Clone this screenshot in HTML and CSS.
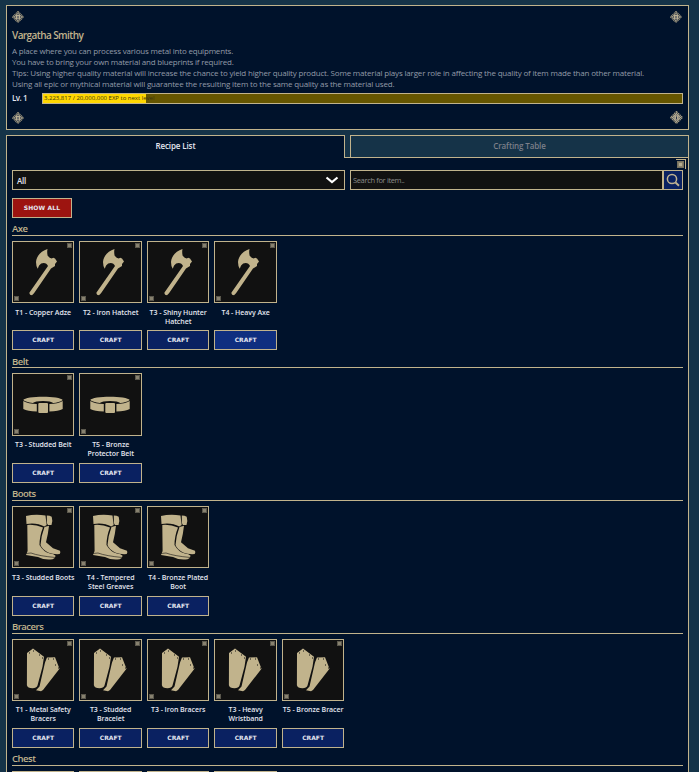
FILE: index.html
```
<!DOCTYPE html>
<html lang="en">
<head>
  <meta charset="UTF-8">
  <title>Vargatha Smithy</title>
  <link rel="stylesheet" href="styles.css">
</head>
<body>
  <svg class="sprites">
    <symbol id="ornament" viewBox="0 0 12 12">
      <path d="M6 .5 11.5 6 6 11.5 .5 6Z" fill="none" stroke="#a39b82" stroke-width="1.100" stroke-dasharray="1.500 .5"/>
      <path d="M6 2.200 9.800 6 6 9.800 2.200 6Z" fill="#4b4f57" stroke="#b5ac92"/>
      <path d="M4 4h4v4H4Z" fill="#b8ae93"/>
      <path d="M5.500 5h1v2.500h-1Z" fill="#29344c"/>
    </symbol>
    <symbol id="axe" viewBox="0 0 62 62">
      <path d="M35.500 8C29 10 24.500 15 24 21q0 4 1.700 6.800 1-4 3.500-5.300 5-1.500 6.800 2.500L17.500 51.500q-.5 2.500 2.500 2.700l2-2L39 27.500l4-2.500v-2l2-2.500-2-3-1.800-.8-1.500.9-2-.8-2-2Q34.800 11.500 35.500 8Z"/>
    </symbol>
    <symbol id="belt" viewBox="0 0 62 62">
      <path d="M11.300 28v8q4 2.300 13.500 2.600v-7.500Q16 31 11.300 28ZM50.700 28v8q-4 2.300-13.300 2.600v-7.500Q46 31 50.700 28Z"/>
      <path fill-rule="evenodd" d="M11.300 27c2-4.500 37-4.500 39.400 0-2 1.800-6 2.800-9.500 3Q39 28 31 28t-10.200 2q-7-1-9.500-3Z"/>
      <rect x="26.300" y="30" width="9.700" height="10" rx="1"/>
    </symbol>
    <symbol id="boots" viewBox="0 0 62 62">
      <path d="M34.800 9.500q3 0 4.900 1.200 1.300 4-.2 8.300h-3.600l-1-2ZM32.500 21l4.500-1.300q-1 9-3 16.500l7 6 7 2.600q.8 1.800-.3 3.200-6 .6-11.700-1.600-6-3-7.500-7.400Q29 30 32.500 21Z"/>
      <path d="M14 10q9-2 19.500-.5.500 5 1.200 9.500l-2.500 1.500Q25 16.500 14.500 18ZM15.300 19q8-.7 15.700 2.500Q27.500 30 27.500 39q4 7 10.500 8.500 4 .3 5.600 2.300-.2 2.600-3 3.500-8 1.200-14.600-2.300L14 49l1.600-4Z"/>
      <path d="m14 47.500 5-.5q8 3 24.500 4.500" fill="none" stroke="#111" stroke-width=".6"/>
    </symbol>
    <symbol id="bracers" viewBox="0 0 62 62">
      <path d="m15 14 6-4.400 11 8.200-1.500 10-5 18.700q-1 2.700-5 2.700-5 0-5.600-3ZM35 18.500l8-.2 4.500 11.500L31 51l-2 1.300-5-1 3.500-3.800 5.500-24Z"/>
      <path d="M17 14h1M21 12h1M27 16h1M30 19h1M36 20h1M41 20h1M43 26h1M46 29h1" stroke="#111"/>
    </symbol>
    <symbol id="search" viewBox="0 0 14 14">
      <circle cx="6" cy="6" r="4.600" fill="none" stroke="#c1b391" stroke-width="1.500"/>
      <path d="m9.500 9.500 3.500 3.300" stroke="#c1b391" stroke-width="1.900"/>
    </symbol>
  </svg>

  <div class="panel intro">
    <svg class="corner tl"><use href="#ornament"/></svg>
    <svg class="corner tr"><use href="#ornament"/></svg>
    <svg class="corner bl"><use href="#ornament"/></svg>
    <svg class="corner br"><use href="#ornament"/></svg>
    <h1>Vargatha Smithy</h1>
    <div class="description">
      <p class="line1">A place where you can process various metal into equipments.</p>
      <p class="line2">You have to bring your own material and blueprints if required.</p>
      <p class="line3">Tips: Using higher quality material will increase the chance to yield higher quality product. Some material plays larger role in affecting the quality of item made than other material.</p>
      <p class="line4">Using all epic or mythical material will guarantee the resulting item to the same quality as the material used.</p>
    </div>
    <div class="level">
      <span class="lv">Lv. 1</span>
      <div class="bar">
        <div class="fill" style="width: 16.119%"></div>
        <span>3,223,817 / 20,000,000 EXP to next level</span>
      </div>
    </div>
  </div>

  <div class="tabs">
    <div class="tab active">Recipe List</div>
    <div class="tab-gap"></div>
    <div class="tab">Crafting Table</div>
  </div>

  <div class="content">
    <div class="mini"></div>
    <div class="filters">
      <div class="select">
        <span>All</span>
        <svg viewBox="0 0 14 8"><path d="M1.500 1.500 7 6l5.500-4.500" fill="none" stroke="#fff" stroke-width="2.200"/></svg>
      </div>
      <div class="search">
        <div class="search-input">Search for item..</div>
        <div class="search-button"><svg><use href="#search"/></svg></div>
      </div>
    </div>
    <div class="show-all">SHOW ALL</div>

    <h2>Axe</h2>
    <div class="items">
      <div class="item">
        <div class="icon"><svg><use href="#axe"/></svg></div>
        <div class="name">T1 - Copper Adze</div>
        <div class="craft">CRAFT</div>
      </div>
      <div class="item">
        <div class="icon"><svg><use href="#axe"/></svg></div>
        <div class="name">T2 - Iron Hatchet</div>
        <div class="craft">CRAFT</div>
      </div>
      <div class="item">
        <div class="icon"><svg><use href="#axe"/></svg></div>
        <div class="name">T3 - Shiny Hunter<br>Hatchet</div>
        <div class="craft">CRAFT</div>
      </div>
      <div class="item">
        <div class="icon"><svg><use href="#axe"/></svg></div>
        <div class="name">T4 - Heavy Axe</div>
        <div class="craft hover">CRAFT</div>
      </div>
    </div>

    <h2>Belt</h2>
    <div class="items">
      <div class="item">
        <div class="icon"><svg><use href="#belt"/></svg></div>
        <div class="name">T3 - Studded Belt</div>
        <div class="craft">CRAFT</div>
      </div>
      <div class="item">
        <div class="icon"><svg><use href="#belt"/></svg></div>
        <div class="name">T5 - Bronze<br>Protector Belt</div>
        <div class="craft">CRAFT</div>
      </div>
    </div>

    <h2>Boots</h2>
    <div class="items">
      <div class="item">
        <div class="icon"><svg><use href="#boots"/></svg></div>
        <div class="name">T3 - Studded Boots</div>
        <div class="craft">CRAFT</div>
      </div>
      <div class="item">
        <div class="icon"><svg><use href="#boots"/></svg></div>
        <div class="name">T4 - Tempered<br>Steel Greaves</div>
        <div class="craft">CRAFT</div>
      </div>
      <div class="item">
        <div class="icon"><svg><use href="#boots"/></svg></div>
        <div class="name">T4 - Bronze Plated<br>Boot</div>
        <div class="craft">CRAFT</div>
      </div>
    </div>

    <h2>Bracers</h2>
    <div class="items">
      <div class="item">
        <div class="icon"><svg><use href="#bracers"/></svg></div>
        <div class="name">T1 - Metal Safety<br>Bracers</div>
        <div class="craft">CRAFT</div>
      </div>
      <div class="item">
        <div class="icon"><svg><use href="#bracers"/></svg></div>
        <div class="name">T3 - Studded<br>Bracelet</div>
        <div class="craft">CRAFT</div>
      </div>
      <div class="item">
        <div class="icon"><svg><use href="#bracers"/></svg></div>
        <div class="name">T3 - Iron Bracers</div>
        <div class="craft">CRAFT</div>
      </div>
      <div class="item">
        <div class="icon"><svg><use href="#bracers"/></svg></div>
        <div class="name">T3 - Heavy<br>Wristband</div>
        <div class="craft">CRAFT</div>
      </div>
      <div class="item">
        <div class="icon"><svg><use href="#bracers"/></svg></div>
        <div class="name">T5 - Bronze Bracer</div>
        <div class="craft">CRAFT</div>
      </div>
    </div>

    <h2>Chest</h2>
    <div class="items">
      <div class="item"><div class="icon"></div></div>
      <div class="item"><div class="icon"></div></div>
      <div class="item"><div class="icon"></div></div>
      <div class="item"><div class="icon"></div></div>
    </div>
  </div>
</body>
</html>
```
FILE: styles.css
```
*, *::before, *::after {
  box-sizing: border-box;
}
body {
  margin: 0;
  padding: 5px 10px 0 6px;
  height: 772px;
  overflow: hidden;
  background: #153348;
  color: #e4e6f0;
  font-family: "Open Sans", sans-serif;
  font-size: 8px;
}
h1, h2, p {
  margin: 0;
}
.sprites {
  position: absolute;
  width: 0;
  height: 0;
}
.panel {
  position: relative;
  height: 125px;
  padding: 23px 5px 0;
  border: 1px solid #c1b38c;
  background: #00122b;
}
.corner {
  position: absolute;
  width: 12px;
  height: 12px;
}
.tl { top: 5px; left: 5px; }
.tr { top: 5px; right: 6px; }
.bl { bottom: 5px; left: 5px; }
.br { bottom: 5px; right: 5px; width: 13px; height: 13px; }
h1 {
  height: 16px;
  font-size: 10px;
  font-weight: 600;
  line-height: 13px;
  letter-spacing: -0.580px;
  color: #c1b38c;
}
.description {
  color: #939ba8;
  line-height: 11px;
  white-space: nowrap;
}
.line1 { letter-spacing: -0.190px; }
.line2 { letter-spacing: -0.215px; }
.line3 { letter-spacing: -0.177px; }
.line4 { letter-spacing: -0.172px; }
.level {
  display: flex;
  margin-top: 4px;
}
.lv {
  width: 30px;
  font-weight: 600;
  line-height: 10px;
  letter-spacing: -0.5px;
}
.bar {
  position: relative;
  flex: 1;
  height: 11px;
  border: 1px solid #c1b38c;
  background: #665600;
}
.fill {
  height: 100%;
  background: #ffd700;
}
.bar span {
  position: absolute;
  left: 1px;
  top: 0;
  font-size: 6px;
  line-height: 9px;
  color: #3b3410;
  white-space: nowrap;
}
.tabs {
  display: flex;
  height: 23px;
  margin-top: 5px;
}
.tab {
  flex: 1;
  height: 23px;
  border: 1px solid #c1b38c;
  text-align: center;
  font-weight: 600;
  line-height: 20px;
  letter-spacing: -0.120px;
  color: #7c7f89;
}
.tab.active {
  border-bottom: 0;
  background: #00122b;
  color: #e4e6f0;
}
.tab-gap {
  width: 5px;
  border-bottom: 1px solid #c1b38c;
}
.content {
  position: relative;
  height: 614px;
  padding: 12px 5px 0;
  border: 1px solid #c1b38c;
  border-width: 0 1px;
  background: #00122b;
  overflow: hidden;
}
.mini {
  position: absolute;
  top: 1px;
  right: 2px;
  width: 10px;
  height: 10px;
  border: 1px solid #c1b38c;
  border-width: 1px 1px 0 0;
}
.mini::after {
  content: "";
  position: absolute;
  top: 1px;
  left: 1px;
  width: 7px;
  height: 7px;
  border: 1px solid #77725f;
  background: #b5ac90;
  box-shadow: inset 0 0 0 1px #888169;
}
.filters {
  display: flex;
  gap: 5px;
  height: 20px;
}
.select, .search {
  width: 333px;
  display: flex;
}
.select {
  align-items: center;
  justify-content: space-between;
  padding: 0 5px 0 4px;
  border: 1px solid #c1b38c;
  background: #111;
  font-weight: 600;
  letter-spacing: -0.3px;
}
.select svg {
  width: 14px;
  height: 8px;
}
.search-input {
  flex: 1;
  padding-left: 2px;
  border: 1px solid #c1b38c;
  background: #111;
  color: #8b8b8b;
  font-size: 7.5px;
  line-height: 19px;
  letter-spacing: -0.350px;
}
.search-button {
  display: flex;
  align-items: center;
  justify-content: center;
  width: 20px;
  border: 1px solid #c1b38c;
  border-left-width: 1px;
  background: #0a2161;
}
.search-button svg {
  width: 14px;
  height: 14px;
}
.show-all {
  width: 60px;
  height: 20px;
  margin-top: 8px;
  border: 1px solid #c1b38c;
  background: #9d1410;
}
.show-all, .craft {
  text-align: center;
  font-family: "DejaVu Sans", sans-serif;
  font-size: 6px;
  font-weight: bold;
  line-height: 18px;
}
.show-all {
  letter-spacing: 0.150px;
}
h2 {
  height: 17.8px;
  padding-top: 5px;
  border-bottom: 1px solid #c1b38c;
  font-size: 9.5px;
  font-weight: 600;
  line-height: 12px;
  letter-spacing: -0.5px;
  color: #c1b38c;
}
.items {
  display: flex;
  gap: 5.1px;
  height: 114.8px;
  padding-top: 4.950px;
}
.item {
  width: 62.4px;
}
.icon {
  position: relative;
  height: 62.4px;
  border: 1px solid #c1b38c;
  background: #111;
}
.icon svg {
  position: absolute;
  top: -1px;
  left: -1px;
  width: 62px;
  height: 62px;
  fill: #c1b38c;
}
.icon::before, .icon::after {
  content: "";
  position: absolute;
  width: 5px;
  height: 5px;
  border: 1px solid #5b584d;
  background: #87816f;
}
.icon::before {
  top: 1px;
  right: 1px;
}
.icon::after {
  bottom: 1px;
  left: 1px;
}
.name {
  height: 27.250px;
  padding-top: 4.4px;
  text-align: center;
  font-size: 7px;
  font-weight: 600;
  line-height: 9px;
  letter-spacing: -0.050px;
  white-space: nowrap;
}
.craft {
  height: 20px;
  border: 1px solid #c1b38c;
  background: #0a2161;
}
.craft.hover {
  background: #0f2f80;
}
```
